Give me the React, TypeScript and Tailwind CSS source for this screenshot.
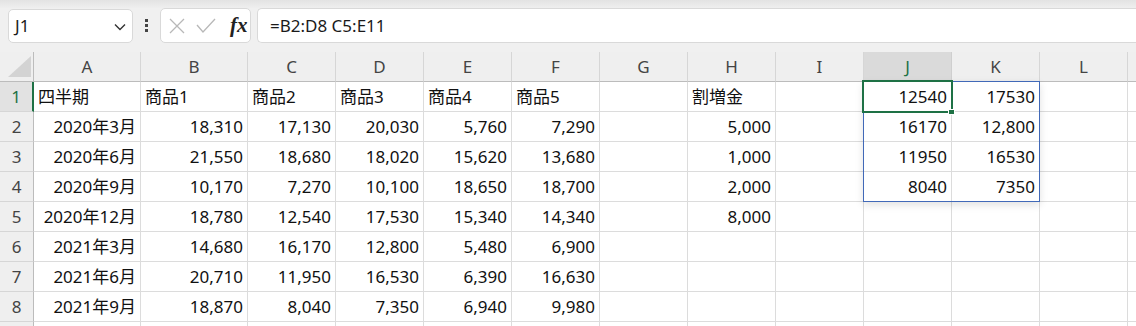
import React from 'react';

const FONT = '"Noto Sans", "Noto Sans CJK JP", "Liberation Sans", sans-serif';

const COLS = ['A', 'B', 'C', 'D', 'E', 'F', 'G', 'H', 'I', 'J', 'K', 'L', ''];

const ROWS: string[][] = [
  ['四半期', '商品1', '商品2', '商品3', '商品4', '商品5', '', '割増金', '', '12540', '17530', '', ''],
  ['2020年3月', '18,310', '17,130', '20,030', '5,760', '7,290', '', '5,000', '', '16170', '12,800', '', ''],
  ['2020年6月', '21,550', '18,680', '18,020', '15,620', '13,680', '', '1,000', '', '11950', '16530', '', ''],
  ['2020年9月', '10,170', '7,270', '10,100', '18,650', '18,700', '', '2,000', '', '8040', '7350', '', ''],
  ['2020年12月', '18,780', '12,540', '17,530', '15,340', '14,340', '', '8,000', '', '', '', '', ''],
  ['2021年3月', '14,680', '16,170', '12,800', '5,480', '6,900', '', '', '', '', '', '', ''],
  ['2021年6月', '20,710', '11,950', '16,530', '6,390', '16,630', '', '', '', '', '', '', ''],
  ['2021年9月', '18,870', '8,040', '7,350', '6,940', '9,980', '', '', '', '', '', '', ''],
  ['', '', '', '', '', '', '', '', '', '', '', '', ''],
];

const isLabel = (s: string) => /^[商四割]/.test(s);

function FormulaBar() {
  return (
    <div className="h-[35px] flex items-stretch bg-[#f0f0f0] pl-[8px]">
      <div className="w-[125px] h-[34px] mt-[1px] bg-white border border-[#d9d9d9] rounded-[5px] flex items-center pl-[6px] pr-[6px]">
        <span className="text-[17px] text-[#1a1a1a] flex-1">J1</span>
        <svg width="12" height="8" viewBox="0 0 12 8" className="mt-[2px]">
          <polyline points="1,1.5 6,6.5 11,1.5" fill="none" stroke="#333" strokeWidth="1.4" />
        </svg>
      </div>
      <div className="w-[27px] flex flex-col items-center justify-center gap-[2px]">
        <div className="w-[3px] h-[3px] bg-[#444]" />
        <div className="w-[3px] h-[3px] bg-[#444]" />
        <div className="w-[3px] h-[3px] bg-[#444]" />
      </div>
      <div className="w-[91px] h-[35px] bg-white border border-[#d9d9d9] rounded-[5px] flex items-center pl-[7px]">
        <svg width="18" height="18" viewBox="0 0 18 18">
          <path d="M2 2 L16 16 M16 2 L2 16" stroke="#b8b8b8" strokeWidth="1.3" fill="none" />
        </svg>
        <svg width="20" height="18" viewBox="0 0 20 18" className="ml-[10px]">
          <polyline points="1,8 7,15 19,2" stroke="#b8b8b8" strokeWidth="1.3" fill="none" />
        </svg>
        <span className="ml-[14px] text-[21px] italic text-[#222] leading-none" style={{ fontFamily: '"Liberation Serif", "DejaVu Serif", serif', fontWeight: 700 }}>
          fx
        </span>
      </div>
      <div className="ml-[6px] flex-1 h-[35px] bg-white border border-[#d9d9d9] rounded-l-[5px] border-r-0 flex items-center pl-[12px]">
        <span className="text-[17px] text-[#1a1a1a]">=B2:D8 C5:E11</span>
      </div>
    </div>
  );
}

export default function App() {
  return (
    <div className="w-[1136px] h-[326px] overflow-hidden bg-white" style={{ fontFamily: FONT }}>
      <div className="h-[8px] bg-gradient-to-b from-[#e3e3e3] to-[#efefef]" />
      <FormulaBar />
      <div className="h-[9px] bg-[#f0f0f0]" />

      <div className="relative">
        <div className="grid grid-cols-[34px_107px_107px_88px_88px_88px_88px_88px_88px_88px_88px_88px_88px_88px] w-[1216px]">
          <div className="relative h-[30px] bg-[#efefef] border-r border-b border-[#bcbcbc]">
            <svg width="24" height="22" viewBox="0 0 24 22" className="absolute left-[8px] top-[4px]">
              <polygon points="23,0 23,21 0,21" fill="#d3d3d3" />
            </svg>
          </div>
          {COLS.map((c, i) => (
            <div
              key={i}
              className={
                c === 'J'
                  ? 'h-[30px] bg-[#dadada] border-r border-b border-r-[#cfcfcf] border-b-[#bcbcbc] flex items-center justify-center text-[17px] text-[#1e7145]'
                  : 'h-[30px] bg-[#efefef] border-r border-b border-r-[#d6d6d6] border-b-[#bcbcbc] flex items-center justify-center text-[17px] text-[#444]'
              }
            >
              {c}
            </div>
          ))}

          {ROWS.map((row, ri) => (
            <React.Fragment key={ri}>
              <div
                className={
                  ri === 0
                    ? 'h-[30px] bg-[#e2e2e2] border-r-2 border-r-[#1e7145] border-b border-b-[#d6d6d6] flex items-center justify-center text-[17px] text-[#1e7145]'
                    : 'h-[30px] bg-[#efefef] border-r border-r-[#bcbcbc] border-b border-b-[#d6d6d6] flex items-center justify-center text-[17px] text-[#444]'
                }
              >
                {ri < 8 ? ri + 1 : ''}
              </div>
              {row.map((v, ci) => (
                <div
                  key={ci}
                  className={
                    isLabel(v)
                      ? 'h-[30px] border-r border-b border-[#dcdcdc] flex items-center justify-start pl-[4px] text-[17px] text-[#111] whitespace-nowrap'
                      : 'h-[30px] border-r border-b border-[#dcdcdc] flex items-center justify-end pr-[4px] text-[17px] text-[#111] whitespace-nowrap'
                  }
                >
                  {v}
                </div>
              ))}
            </React.Fragment>
          ))}
        </div>

        {/* spill range J1:K4 */}
        <div className="absolute left-[863px] top-[29px] w-[177px] h-[121px] border border-[#4169b8] shadow-[0_3px_8px_rgba(0,0,0,0.12)] pointer-events-none" />
        {/* active cell J1 */}
        <div className="absolute left-[862px] top-[28px] w-[91px] h-[33px] border-2 border-[#1e7145] pointer-events-none" />
        <div className="absolute left-[948px] top-[57px] w-[7px] h-[6px] bg-[#1e7145] border border-white pointer-events-none" />
      </div>
    </div>
  );
}
